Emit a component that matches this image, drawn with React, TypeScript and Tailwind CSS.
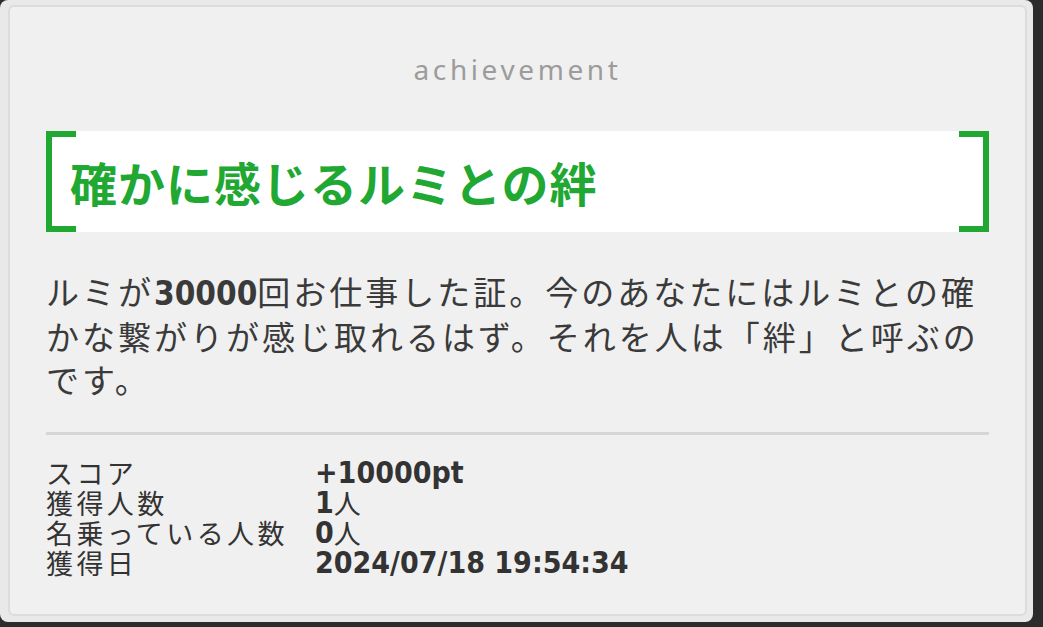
const jp = { fontFamily: '"Noto Sans CJK JP", "Noto Sans", sans-serif' };
const num = { fontFamily: '"DejaVu Sans Condensed", "DejaVu Sans", "Noto Sans CJK JP", sans-serif' };

const stats = [
  { label: 'スコア', value: '+10000pt' },
  { label: '獲得人数', value: '1', unit: '人' },
  { label: '名乗っている人数', value: '0', unit: '人' },
  { label: '獲得日', value: '2024/07/18 19:54:34' },
];

export default function App() {
  return (
    <div className="w-[1043px] h-[627px] bg-[#2c2c2c] overflow-hidden" style={jp}>
      <div className="w-[1033px] h-[622px] rounded-lg bg-[#e9e9e9] pl-[8px] pr-[6px] pt-[5px] pb-[6px]">
        <div className="h-full rounded-md border-2 border-[#dcdcdc] bg-[#f0f0f0] px-[36px] pt-[42px]">
          <div className="text-center text-[28px] leading-[40px] tracking-[3.6px] text-[#9c9c9c]" style={{ fontFamily: '"Noto Sans", sans-serif' }}>
            achievement
          </div>

          <div className="relative mt-[42px] h-[101px] bg-white">
            <span className="absolute left-0 top-0 h-full w-[30px] border-y-[6px] border-l-[6px] border-[#20a833]" />
            <span className="absolute right-0 top-0 h-full w-[30px] border-y-[6px] border-r-[6px] border-[#20a833]" />
            <h1 className="pl-[24px] text-[47px] font-bold leading-[101px] tracking-[1px] text-[#20a833] whitespace-nowrap">
              確かに感じるルミとの絆
            </h1>
          </div>

          <div className="mt-[38px] text-[33px] leading-[43px] tracking-[3px] text-[#3a3a3a] whitespace-nowrap">
            <div>
              ルミが<span className="font-bold tracking-[0px]" style={num}>30000</span>回お仕事した証。今のあなたにはルミとの確
            </div>
            <div>かな繋がりが感じ取れるはず。それを人は「絆」と呼ぶの</div>
            <div>です。</div>
          </div>

          <div className="mt-[31px] h-[3px] bg-[#d6d6d6]" />

          <div className="mt-[23px] grid grid-cols-[269px_1fr] auto-rows-[30px] text-[27px] leading-[30px] text-[#333]">
            {stats.map((s) => (
              <div key={s.label} className="contents">
                <div className="h-[30px] tracking-[3.4px] whitespace-nowrap">{s.label}</div>
                <div className="h-[30px] whitespace-nowrap flex items-center">
                  <span className="text-[30px] font-bold" style={num}>{s.value}</span>
                  {s.unit && <span>{s.unit}</span>}
                </div>
              </div>
            ))}
          </div>
        </div>
      </div>
    </div>
  );
}
